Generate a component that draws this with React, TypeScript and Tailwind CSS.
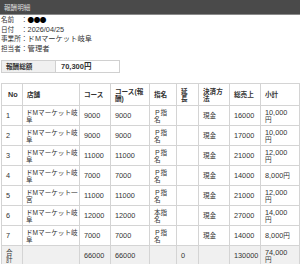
import React from 'react';

type Row = {
  no: string;
  shop: string;
  course: string;
  reward: string;
  shimei: string;
  pay: string;
  sales: string;
  sub: string;
};

const rows: Row[] = [
  { no: '1', shop: 'ドMマーケット岐阜', course: '9000', reward: '9000', shimei: 'Ｐ指名', pay: '現金', sales: '16000', sub: '10,000円' },
  { no: '2', shop: 'ドMマーケット岐阜', course: '9000', reward: '9000', shimei: 'Ｐ指名', pay: '現金', sales: '17000', sub: '10,000円' },
  { no: '3', shop: 'ドMマーケット岐阜', course: '11000', reward: '11000', shimei: 'Ｐ指名', pay: '現金', sales: '21000', sub: '12,000円' },
  { no: '4', shop: 'ドMマーケット岐阜', course: '7000', reward: '7000', shimei: 'Ｐ指名', pay: '現金', sales: '14000', sub: '8,000円' },
  { no: '5', shop: 'ドMマーケット一宮', course: '11000', reward: '11000', shimei: 'Ｐ指名', pay: '現金', sales: '21000', sub: '12,000円' },
  { no: '6', shop: 'ドMマーケット岐阜', course: '12000', reward: '12000', shimei: '本指名', pay: '現金', sales: '27000', sub: '14,000円' },
  { no: '7', shop: 'ドMマーケット岐阜', course: '7000', reward: '7000', shimei: 'Ｐ指名', pay: '現金', sales: '14000', sub: '8,000円' },
];

// five-digit amounts don't fit the narrow column, so the 円 drops to a second line
const Yen = ({ v }: { v: string }) =>
  v.length >= 7 ? (
    <>
      <span className="text-[7.3px]">{v.slice(0, -1)}</span>
      <br />円
    </>
  ) : (
    <>
      <span className="text-[7.3px]">{v.slice(0, -1)}</span>円
    </>
  );

const th = 'border border-[#d4d4d4] px-[4px] pt-[4px] pb-[3px] text-left font-bold align-middle';
const td = 'border border-[#d4d4d4] px-[4px] pt-[3px] pb-[2px] align-middle';
const num = `${td} text-[7.3px] whitespace-nowrap`;

export default function App() {
  return (
    <div
      className="w-[300px] h-[264px] overflow-hidden bg-white text-[#333] text-[6.6px] leading-[7px]"
      style={{ fontFamily: '"Liberation Sans", "Noto Sans CJK JP", sans-serif' }}
    >
      {/* Title bar */}
      <div className="h-[15px] bg-[#4a4a4a] border-b border-[#8a8a8a] flex items-center px-[4px] text-[#dcdcdc]">
        報酬明細
      </div>

      {/* Info */}
      <div className="px-[1px] leading-[9.7px] whitespace-nowrap">
        <div className="flex">
          <span className="w-[20px] shrink-0">名前</span>
          <span className="shrink-0">：</span>
          <span className="font-['Noto_Sans_CJK_JP'] text-black tracking-[-0.5px]">●●●</span>
        </div>
        <div className="flex">
          <span className="w-[20px] shrink-0">日付</span>
          <span className="shrink-0">：</span>
          <span className="text-[7.3px]">2026/04/25</span>
        </div>
        <div className="flex">
          <span className="w-[20px] shrink-0">事業所</span>
          <span className="shrink-0">：</span>
          <span className="text-[7.3px]">ドMマーケット岐阜</span>
        </div>
        <div className="flex">
          <span className="w-[20px] shrink-0">担当者</span>
          <span className="shrink-0">：</span>
          <span className="text-[7.3px]">管理者</span>
        </div>
      </div>

      {/* Total */}
      <div className="mt-[6px] ml-[1px] w-[119px] h-[13px] flex border border-[#d0d0d0]">
        <div className="w-[54px] bg-[#f0f0f0] border-r border-[#d0d0d0] flex items-center px-[4px] font-bold">報酬総額</div>
        <div className="flex items-center px-[5px] font-bold text-[7.5px]">70,300円</div>
      </div>

      {/* Detail table */}
      <table className="mt-[10px] ml-[1px] w-[298px] table-fixed border-collapse">
        <thead>
          <tr>
            <th className={`${th} w-[21px] text-[7.3px] !pl-[6px]`}>No</th>
            <th className={`${th} w-[57px]`}>店舗</th>
            <th className={`${th} w-[31px]`}>コース</th>
            <th className={`${th} w-[39px]`}>コース(報<br />酬)</th>
            <th className={`${th} w-[27px]`}>指名</th>
            <th className={`${th} w-[22px]`}>延<br />長</th>
            <th className={`${th} w-[31px]`}>決済方<br />法</th>
            <th className={`${th} w-[31px]`}>総売上</th>
            <th className={`${th} w-[39px]`}>小計</th>
          </tr>
        </thead>
        <tbody>
          {rows.map((r) => (
            <tr key={r.no}>
              <td className={num}>{r.no}</td>
              <td className={`${td} !pl-[3px] !pr-[1px]`}>{r.shop}</td>
              <td className={num}>{r.course}</td>
              <td className={num}>{r.reward}</td>
              <td className={td}>{r.shimei}</td>
              <td className={td}></td>
              <td className={td}>{r.pay}</td>
              <td className={num}>{r.sales}</td>
              <td className={`${td} whitespace-nowrap`}><Yen v={r.sub} /></td>
            </tr>
          ))}
          <tr className="bg-[#f0f0f0]">
            <td className={td}>合計</td>
            <td className={td}></td>
            <td className={num}>66000</td>
            <td className={num}>66000</td>
            <td className={td}></td>
            <td className={num}>0</td>
            <td className={td}></td>
            <td className={num}>130000</td>
            <td className={`${td} whitespace-nowrap`}><Yen v="74,000円" /></td>
          </tr>
        </tbody>
      </table>
    </div>
  );
}
